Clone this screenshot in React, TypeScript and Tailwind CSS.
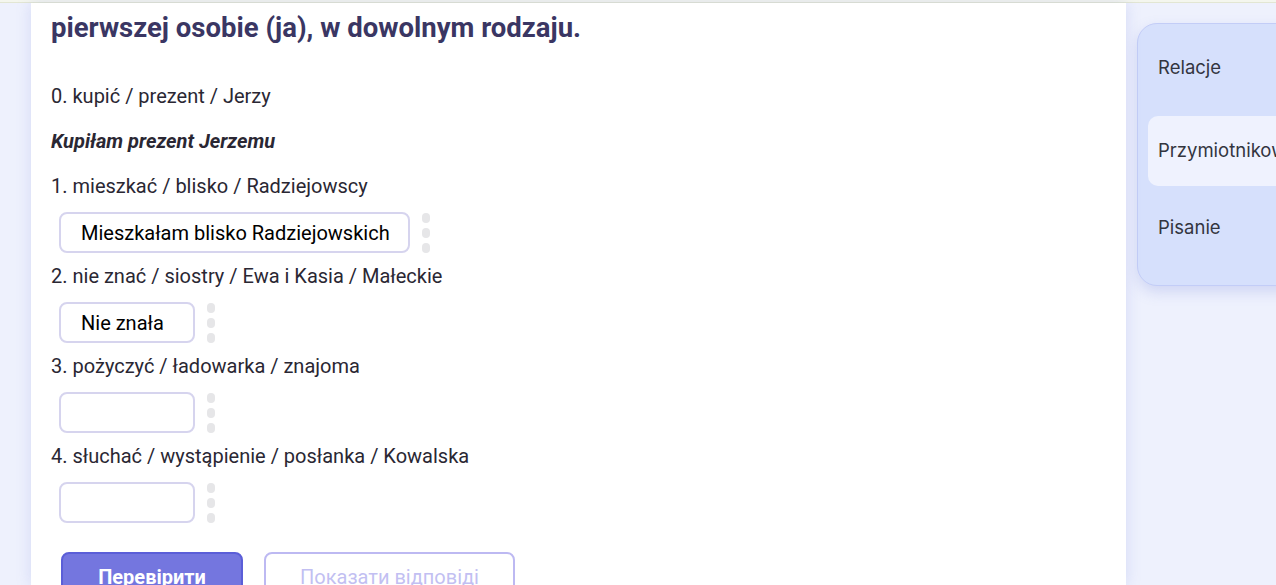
import React from 'react';

const Handle: React.FC = () => (
  <div className="flex flex-col gap-[5px] ml-3">
    <span className="w-2 h-[10px] rounded-full bg-[#e6e6e8]"></span>
    <span className="w-2 h-[10px] rounded-full bg-[#e6e6e8]"></span>
    <span className="w-2 h-[10px] rounded-full bg-[#e6e6e8]"></span>
  </div>
);

const items = [
  { q: '1. mieszkać / blisko / Radziejowscy', a: 'Mieszkałam blisko Radziejowskich', w: 'w-[351px]' },
  { q: '2. nie znać / siostry / Ewa i Kasia / Małeckie', a: 'Nie znała', w: 'w-[136px]' },
  { q: '3. pożyczyć / ładowarka / znajoma', a: '', w: 'w-[136px]' },
  { q: '4. słuchać / wystąpienie / posłanka / Kowalska', a: '', w: 'w-[136px]' },
];

const App: React.FC = () => {
  return (
    <div className="w-[1276px] h-[585px] overflow-hidden bg-[#eef1fd] flex flex-col" style={{ fontFamily: 'Roboto, "Noto Sans", sans-serif' }}>
      <div className="h-[3px] shrink-0 bg-[#f4f6ee] border-b border-[#e2e6d3]"></div>
      <div className="flex flex-1 min-h-0">
        <div className="w-[31px] shrink-0"></div>
        {/* main card */}
        <main className="w-[1095px] shrink-0 bg-white shadow-[0_0_14px_rgba(120,130,220,0.22)] pl-5 relative z-10">
          <h2 className="mt-2 text-[27.5px] leading-[34px] font-bold text-[#3a3663]">
            pierwszej osobie (ja), w dowolnym rodzaju.
          </h2>
          <div className="mt-[36px] text-[20px] leading-[30px] text-[#2a2733]">0. kupić / prezent / Jerzy</div>
          <div className="mt-[15px] text-[20px] leading-[30px] text-[#2a2733] font-bold italic">Kupiłam prezent Jerzemu</div>
          {items.map((it, i) => (
            <div key={i} className={i === 0 ? 'mt-[15px]' : 'mt-[8px]'}>
              <div className="text-[20px] leading-[30px] text-[#2a2733]">{it.q}</div>
              <div className="flex items-center ml-2 mt-[11px]">
                <input
                  readOnly
                  value={it.a}
                  className={`${it.w} h-[41px] rounded-lg border-2 border-[#d6d4ee] bg-white pl-5 pr-3 text-[20px] text-black outline-none`}
                  style={{ fontFamily: 'Roboto, sans-serif' }}
                />
                <Handle />
              </div>
            </div>
          ))}
          <div className="flex gap-[21px] ml-[10px] mt-[29px]">
            <button className="w-[182px] h-[50px] rounded-lg border-2 border-[#5b5ed8] bg-[#7476df] text-white text-[20px] font-bold">
              Перевірити
            </button>
            <button className="w-[251px] h-[50px] rounded-lg border-2 border-[#bdb9f2] bg-white text-[#c2bff2] text-[20px]">
              Показати відповіді
            </button>
          </div>
        </main>
        <div className="w-[11px] shrink-0"></div>
        {/* side nav */}
        <aside className="shrink-0 pt-5">
          <nav
            className="w-[300px] h-[263px] rounded-[20px] border border-[#c3cdf7] bg-[#d6e0fc] shadow-[0_6px_14px_rgba(120,135,220,0.25)] px-[10px] pt-[9px] flex flex-col text-[18.5px] text-[#33353f]"
            style={{ fontFamily: 'Inter, sans-serif' }}
          >
            <div className="h-[70px] flex items-center px-[10px] rounded-[10px]">Relacje</div>
            <div className="mt-[13px] h-[70px] flex items-center px-[10px] rounded-[10px] bg-[#eff2fe]">Przymiotnikowe</div>
            <div className="mt-[7px] h-[70px] flex items-center px-[10px] rounded-[10px]">Pisanie</div>
          </nav>
        </aside>
      </div>
    </div>
  );
};

export default App;
